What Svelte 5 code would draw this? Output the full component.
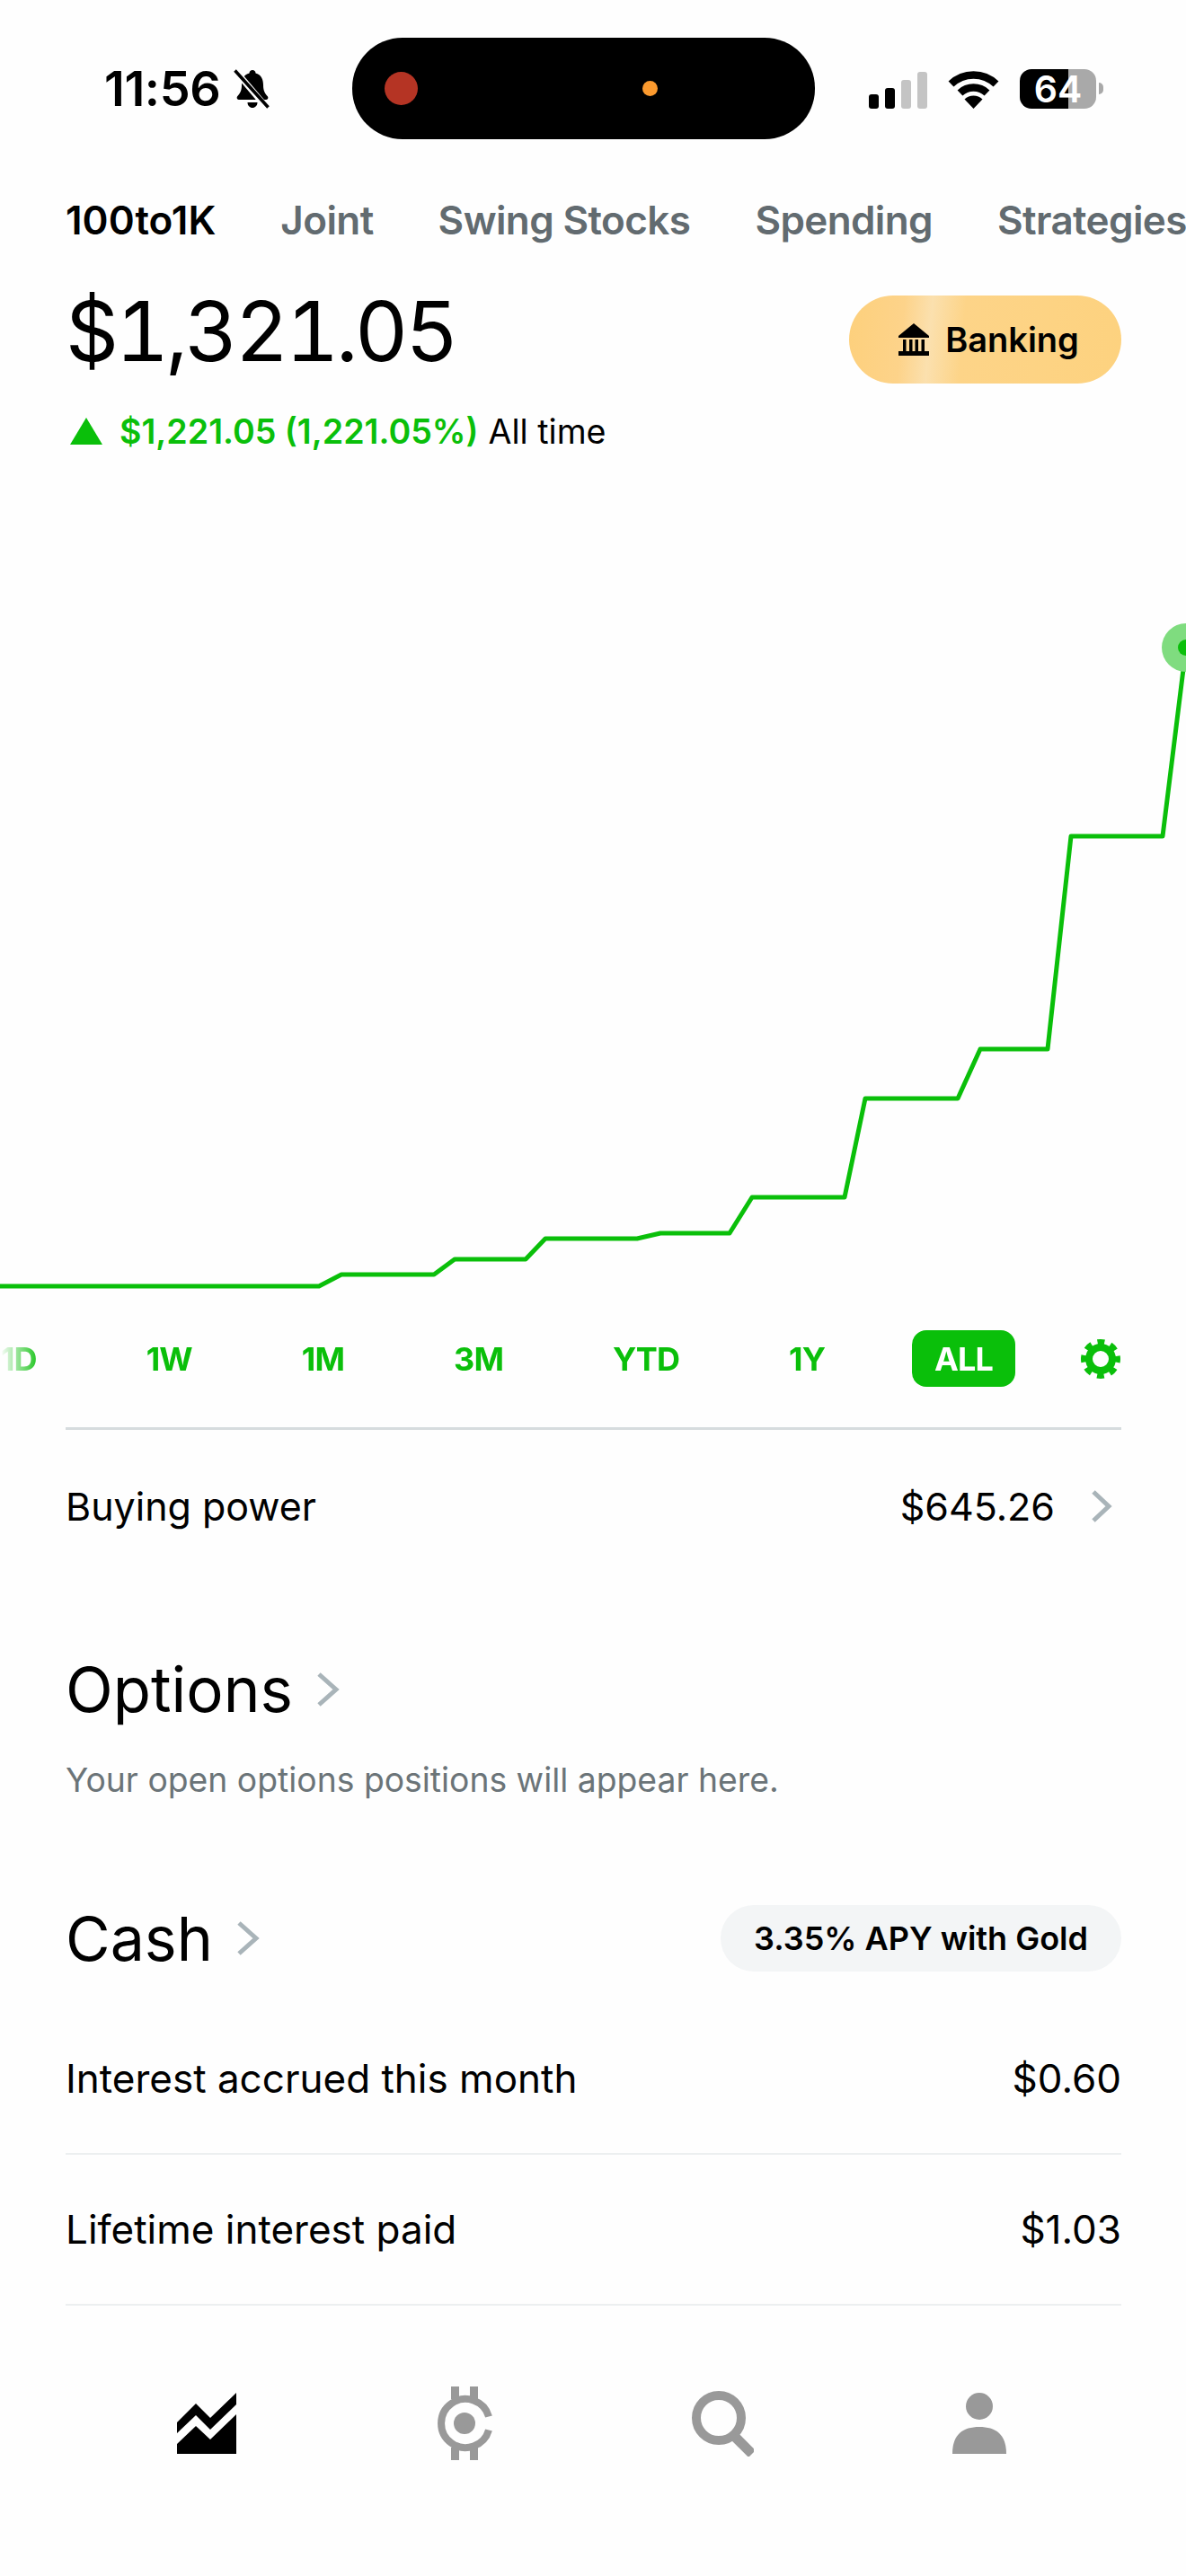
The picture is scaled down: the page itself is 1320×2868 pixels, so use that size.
<script>
  const tabs = ['100to1K', 'Joint', 'Swing Stocks', 'Spending', 'Strategies'];
  const ranges = ['1D', '1W', '1M', '3M', 'YTD', '1Y', 'ALL'];

  // chart line, in page pixels (the svg starts at y = 600)
  const points = [
    [0, 1430], [355, 1430], [380, 1417], [483, 1417], [506, 1400], [585, 1400],
    [607, 1377], [709, 1377], [735, 1371], [812, 1371], [837, 1331], [940, 1331],
    [963, 1221], [1066, 1221], [1091, 1166], [1166, 1166], [1192, 929], [1294, 929],
    [1320, 719]
  ];
  const line = points.map(([x, y]) => `${x},${y - 600}`).join(' ');
</script>

<div class="page">
  <header class="status">
    <div class="clock">
      <span class="time">11:56</span>
      <svg class="bell" width="42" height="44" viewBox="0 0 42 44">
        <path d="M21 1c2 0 3.500 1.500 3.500 3.500 6 1.500 8.500 6.500 8.500 13 0 7 2 9.500 5 13 1 1.500 0 3.500-2 3.500H6c-2 0-3-2-2-3.500 3-3.500 5-6 5-13 0-6.500 2.500-11.500 8.500-13C17.500 2.500 19 1 21 1zM15.500 37h11c0 3.500-2.500 6-5.500 6s-5.500-2.500-5.500-6z" fill="#000" />
        <path d="M3 3l34 40" stroke="#fff" stroke-width="7" />
        <path d="M1.500 1.500l37 41" stroke="#000" stroke-width="3.500" />
      </svg>
    </div>
    <div class="island">
      <span class="rec"></span>
      <span class="mic"></span>
    </div>
    <div class="indicators">
      <div class="signal">
        <span class="on s1"></span>
        <span class="on s2"></span>
        <span class="s3"></span>
        <span class="s4"></span>
      </div>
      <svg width="57" height="42" viewBox="0 0 57 42">
        <path d="M3.500 14.500a36 36 0 0 1 50 0" fill="none" stroke="#000" stroke-width="8.500" />
        <path d="M13.500 24.500a22 22 0 0 1 30 0" fill="none" stroke="#000" stroke-width="8.500" />
        <path d="M28.500 42L18.500 31.500a14.500 14.500 0 0 1 20 0z" fill="#000" />
      </svg>
      <div class="battery">
        <div class="cell"><span>64</span></div>
        <span class="nub"></span>
      </div>
    </div>
  </header>

  <nav class="tabs">
    {#each tabs as tab, i}
      <span class="tab" class:active={i === 0}>{tab}</span>
    {/each}
  </nav>

  <section class="hero">
    <h1>$1,321.05</h1>
    <button class="banking">
      <svg width="34" height="36" viewBox="0 0 34 36">
        <path d="M17 0L34 14v2H0v-2z" fill="#000" />
        <path d="M5 18h3.500v13H5zM12 18h3.500v13H12zM18.500 18H22v13h-3.500zM25.500 18H29v13h-3.500z" fill="#000" />
        <path d="M0 31h34v5H0z" fill="#000" />
      </svg>
      Banking
    </button>
  </section>

  <div class="delta">
    <svg width="36" height="30" viewBox="0 0 36 30"><path d="M18 0l18 30H0z" fill="#0abf0a" /></svg>
    <span class="gain">$1,221.05 (1,221.05%)</span>
    <span>All time</span>
  </div>

  <svg class="chart" width="1320" height="860" viewBox="0 0 1320 860">
    <polyline points={line} fill="none" stroke="#0abf0a" stroke-width="5" stroke-linejoin="round" />
    <circle cx="1320" cy="119" r="27" fill="#7fdc7f" />
    <circle cx="1320" cy="119" r="9" fill="#0abf0a" />
  </svg>

  <div class="ranges">
    <div class="range-list">
      {#each ranges as range}
        <span class="range" class:selected={range === 'ALL'}>{range}</span>
      {/each}
    </div>
    <svg class="gear" width="44" height="44" viewBox="0 0 44 44">
      <circle cx="22" cy="22" r="13" fill="none" stroke="#0abf0a" stroke-width="8" />
      <circle cx="22" cy="22" r="19" fill="none" stroke="#0abf0a" stroke-width="6" stroke-dasharray="7.900 7" stroke-dashoffset="4" />
    </svg>
  </div>

  <div class="rule"></div>

  <div class="row buying">
    <span>Buying power</span>
    <span class="value">
      $645.26
      <svg width="24" height="36" viewBox="0 0 24 36"><path d="M3 2l17 16L3 34" fill="none" stroke="#a9b4b9" stroke-width="5" /></svg>
    </span>
  </div>

  <section class="options">
    <h2>Options
      <svg width="26" height="38" viewBox="0 0 26 38"><path d="M3 2l19 17L3 36" fill="none" stroke="#a9b4b9" stroke-width="5" /></svg>
    </h2>
    <p>Your open options positions will appear here.</p>
  </section>

  <section class="cash">
    <div class="cash-head">
      <h2>Cash
        <svg width="26" height="38" viewBox="0 0 26 38"><path d="M3 2l19 17L3 36" fill="none" stroke="#a9b4b9" stroke-width="5" /></svg>
      </h2>
      <span class="apy">3.35% APY with Gold</span>
    </div>
    <div class="row line-row"><span>Interest accrued this month</span><span>$0.60</span></div>
    <div class="row line-row"><span>Lifetime interest paid</span><span>$1.03</span></div>
  </section>

  <nav class="bottom">
    <svg width="66" height="68" viewBox="0 0 66 68">
      <path d="M0 33L21 12l16 16L66 0v13L37 41 21 25 0 45z" fill="#000" />
      <path d="M0 57l21-20 16 15 29-28v44H0z" fill="#000" />
    </svg>
    <svg width="64" height="82" viewBox="-2 0 64 82">
      <path d="M58 33.500A27 27 0 1 0 58 48.500" fill="none" stroke="#999" stroke-width="8" />
      <circle cx="31" cy="41" r="12" fill="#999" />
      <path d="M16 0h9v14h-9zM37 0h9v14h-9zM16 68h9v14h-9zM37 68h9v14h-9z" fill="#999" />
    </svg>
    <svg width="70" height="74" viewBox="0 0 70 74">
      <circle cx="31" cy="31" r="25" fill="none" stroke="#999" stroke-width="10" />
      <path d="M48 51l20 20" stroke="#999" stroke-width="11" />
    </svg>
    <svg width="60" height="68" viewBox="0 0 60 68">
      <circle cx="30" cy="15" r="15" fill="#999" />
      <path d="M0 68c0-22 12-30 30-30s30 8 30 30z" fill="#999" />
    </svg>
  </nav>
</div>

<style>
  :global(body) {
    margin: 0;
    background: #fefefe;
    color: #000;
    font-family: Inter, "Liberation Sans", sans-serif;
  }

  .page {
    width: 1320px;
    height: 2868px;
    overflow: hidden;
    display: flex;
    flex-direction: column;
  }

  h1, h2, p {
    margin: 0;
    font-weight: 400;
  }

  /* status bar */
  .status {
    height: 113px;
    margin-top: 42px;
    display: flex;
    align-items: center;
  }

  .clock {
    width: 392px;
    flex: none;
    padding-left: 116px;
    box-sizing: border-box;
    display: flex;
    align-items: center;
    gap: 15px;
  }

  .time {
    font: 600 54px Inter, sans-serif;
    letter-spacing: -0.4px;
  }

  .island {
    width: 515px;
    height: 113px;
    border-radius: 56px;
    background: #000;
    position: relative;
    flex: none;
  }

  .rec {
    position: absolute;
    left: 36px;
    top: 38px;
    width: 37px;
    height: 37px;
    border-radius: 50%;
    background: #b53424;
  }

  .mic {
    position: absolute;
    left: 323px;
    top: 48px;
    width: 17px;
    height: 17px;
    border-radius: 50%;
    background: #fb9a2e;
  }

  .indicators {
    padding-left: 60px;
    display: flex;
    align-items: flex-end;
    height: 44px;
  }

  .signal {
    display: flex;
    align-items: flex-end;
    gap: 7px;
    margin-right: 23px;
  }

  .signal span {
    width: 11px;
    border-radius: 3px;
    background: #c4c4c4;
  }

  .signal .on { background: #000; }
  .s1 { height: 16px; }
  .s2 { height: 23px; }
  .s3 { height: 32px; }
  .s4 { height: 41px; }

  .battery {
    margin-left: 23px;
    display: flex;
    align-items: center;
    gap: 3px;
  }

  .cell {
    width: 85px;
    height: 44px;
    border-radius: 13px;
    background: linear-gradient(90deg, #000 54px, #a9a9a9 54px);
    display: flex;
    align-items: center;
    justify-content: center;
    color: #fff;
    font: 600 41px Inter, sans-serif;
  }

  .nub {
    width: 5px;
    height: 13px;
    border-radius: 0 5px 5px 0;
    background: #a9a9a9;
  }

  /* account tabs */
  .tabs {
    margin-top: 65px;
    padding-left: 73px;
    height: 50px;
    display: flex;
    align-items: center;
    gap: 72px;
    white-space: nowrap;
  }

  .tab {
    font-size: 44px;
    font-weight: 600;
    letter-spacing: -0.6px;
    color: #626b70;
  }

  .tab.active {
    color: #000;
    letter-spacing: 0;
  }

  /* balance */
  .hero {
    margin-top: 59px;
    padding: 0 72px 0 73px;
    height: 98px;
    display: flex;
    align-items: center;
    justify-content: space-between;
  }

  h1 {
    font-size: 92px;
    line-height: 98px;
    letter-spacing: -3.6px;
    font-variant-numeric: tabular-nums;
    margin-bottom: 18px;
  }

  .banking {
    width: 303px;
    height: 98px;
    border: 0;
    border-radius: 49px;
    padding: 0 0 0 8px;
    background: linear-gradient(95deg, #fdd07c 0%, #fdd38a 20%, #fbe0ae 30%, #fdd488 42%, #fdd27f 100%);
    color: #000;
    font: 600 38px Inter, sans-serif;
    display: flex;
    align-items: center;
    justify-content: center;
    gap: 18px;
  }

  .delta {
    margin-top: 31px;
    padding-left: 78px;
    height: 44px;
    display: flex;
    align-items: center;
    gap: 11px;
    font-size: 37.600px;
    white-space: nowrap;
  }

  .gain {
    margin-left: 8px;
    font-weight: 600;
    color: #0abf0a;
  }

  .chart {
    display: block;
    margin-top: 100px;
    flex: none;
  }

  /* range selector */
  .ranges {
    margin-top: 19px;
    height: 63px;
    padding-right: 73px;
    display: flex;
    align-items: center;
    justify-content: space-between;
  }

  .range-list {
    margin-left: -24px;
    display: flex;
    align-items: center;
    gap: 72px;
    mask-image: linear-gradient(90deg, transparent 24px, #000 70px);
  }

  .range {
    height: 63px;
    padding: 0 25px;
    border-radius: 16px;
    display: flex;
    align-items: center;
    font-size: 36px;
    font-weight: 700;
    letter-spacing: -0.9px;
    color: #0abf0a;
  }

  .range.selected {
    background: #0abf0a;
    color: #fff;
  }

  .rule {
    margin: 45px 72px 0 73px;
    height: 3px;
    flex: none;
    background: #d6dcde;
  }

  .row {
    display: flex;
    align-items: center;
    justify-content: space-between;
    font-size: 44px;
  }

  .buying {
    height: 90px;
    margin-top: 40px;
    padding: 0 82px 0 73px;
    font-size: 43px;
  }

  .value {
    display: flex;
    align-items: center;
    gap: 40px;
  }

  .options {
    margin-top: 114px;
    padding-left: 73px;
  }

  h2 {
    font-size: 69px;
    line-height: 90px;
    display: flex;
    align-items: center;
    gap: 26px;
  }

  .options p {
    margin-top: 31px;
    font-size: 37.300px;
    line-height: 50px;
    color: #6b7478;
  }

  .cash {
    margin-top: 106px;
    padding: 0 72px 0 73px;
  }

  .cash-head {
    height: 90px;
    margin-bottom: 28px;
    display: flex;
    align-items: center;
    justify-content: space-between;
  }

  .cash-head h2 {
    font-size: 68px;
  }

  .apy {
    width: 446px;
    height: 74px;
    border-radius: 37px;
    background: #f3f5f6;
    display: flex;
    align-items: center;
    justify-content: center;
    font-size: 36px;
    font-weight: 600;
  }

  .line-row {
    height: 168px;
    box-sizing: border-box;
    border-bottom: 2px solid #eceff0;
  }

  .bottom {
    margin-top: 90px;
    padding-left: 197px;
    display: flex;
    align-items: center;
    gap: 221px;
  }
</style>
